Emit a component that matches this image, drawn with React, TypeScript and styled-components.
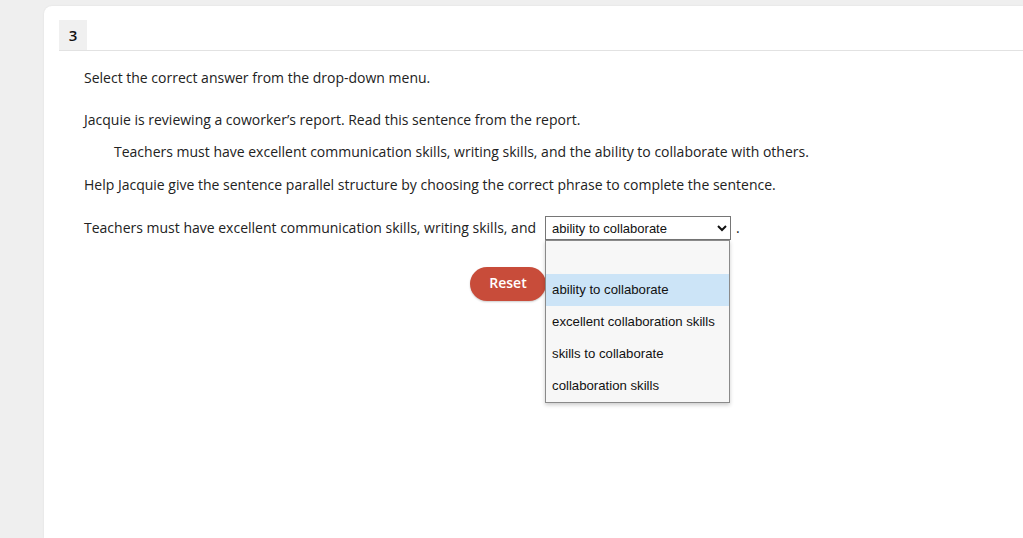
import React from "react";
import styled, { createGlobalStyle } from "styled-components";

const options = [
  "",
  "ability to collaborate",
  "excellent collaboration skills",
  "skills to collaborate",
  "collaboration skills",
];

const App = () => {
  return (
    <>
      <GlobalStyle />
      <Page>
        <Card>
          <Header>
            <Number>3</Number>
          </Header>
          <Content>
            <Paragraph>Select the correct answer from the drop-down menu.</Paragraph>
            <Paragraph $top={22}>
              Jacquie is reviewing a coworker’s report. Read this sentence from the report.
            </Paragraph>
            <Quote>
              Teachers must have excellent communication skills, writing skills, and the ability
              to collaborate with others.
            </Quote>
            <Paragraph $top={13}>
              Help Jacquie give the sentence parallel structure by choosing the correct phrase to
              complete the sentence.
            </Paragraph>
            <SentenceRow>
              <span>Teachers must have excellent communication skills, writing skills, and</span>
              <SelectWrap>
                <Select defaultValue="ability to collaborate">
                  {options.map((o) => (
                    <option key={o} value={o}>
                      {o}
                    </option>
                  ))}
                </Select>
                <OptionList>
                  {options.map((o) => (
                    <OptionItem key={o} $selected={o === "ability to collaborate"}>
                      {o}
                    </OptionItem>
                  ))}
                </OptionList>
              </SelectWrap>
              <span>.</span>
            </SentenceRow>
            <ButtonRow>
              <ResetButton>Reset</ResetButton>
            </ButtonRow>
          </Content>
        </Card>
      </Page>
    </>
  );
};

const GlobalStyle = createGlobalStyle`
  html, body {
    margin: 0;
    padding: 0;
    background: #efefef;
    font-family: "Open Sans", "Noto Sans", sans-serif;
    color: #222;
    overflow: hidden;
  }
`;

const Page = styled.div`
  height: 538px;
  padding: 6px 0 0 44px;
  box-sizing: border-box;
  overflow: hidden;
`;

const Card = styled.div`
  background: #fff;
  height: 532px;
  border-top-left-radius: 8px;
  box-shadow: 0 0 2px rgba(0, 0, 0, 0.08);
  padding: 14px 0 0 15px;
  box-sizing: border-box;
`;

const Header = styled.div`
  display: flex;
  border-bottom: 1px solid #e2e2e2;
`;

const Number = styled.div`
  width: 28px;
  height: 30px;
  background: #f0f0f0;
  display: flex;
  align-items: center;
  justify-content: center;
  font-size: 15px;
  font-weight: 600;
  color: #111;
`;

const Content = styled.div`
  padding: 17px 0 0 25px;
  font-size: 14px;
  line-height: 20px;
`;

const Paragraph = styled.p<{ $top?: number }>`
  margin: ${(p) => p.$top ?? 0}px 0 0;
`;

const Quote = styled.p`
  margin: 12px 0 0 30px;
`;

const SentenceRow = styled.div`
  margin-top: 21px;
  display: flex;
  align-items: center;
  height: 24px;
  & > span:first-child {
    margin-right: 9px;
  }
  & > span:last-child {
    margin-left: 5px;
  }
`;

const SelectWrap = styled.span`
  position: relative;
  display: inline-block;
`;

const Select = styled.select`
  width: 186px;
  height: 24px;
  font-family: "Liberation Sans", Arial, sans-serif;
  font-size: 13px;
  color: #111;
  border: 1px solid #767676;
  border-radius: 0;
  background: #fff;
  padding: 0 2px;
  display: block;
`;

const OptionList = styled.div`
  position: absolute;
  left: 0;
  top: 24px;
  width: 185px;
  padding-top: 1px;
  background: #f7f7f7;
  border: 1px solid #8a8a8a;
  box-shadow: 0 2px 4px rgba(0, 0, 0, 0.2);
  box-sizing: border-box;
  font-family: "Liberation Sans", Arial, sans-serif;
  font-size: 13.2px;
  color: #111;
  z-index: 2;
`;

const OptionItem = styled.div<{ $selected?: boolean }>`
  height: 32px;
  line-height: 32px;
  padding-left: 6px;
  background: ${(p) => (p.$selected ? "#cce4f7" : "transparent")};
  white-space: nowrap;
`;

const ButtonRow = styled.div`
  margin-top: 27px;
  padding-left: 386px;
`;

const ResetButton = styled.button`
  width: 76px;
  height: 34px;
  border: none;
  border-radius: 17px;
  background: #c84c3a;
  color: #fff;
  font-family: "Open Sans", sans-serif;
  font-size: 14px;
  font-weight: 600;
  line-height: 1;
  padding: 0 0 3px;
  box-shadow: 0 1px 2px rgba(0, 0, 0, 0.2);
`;

export default App;
